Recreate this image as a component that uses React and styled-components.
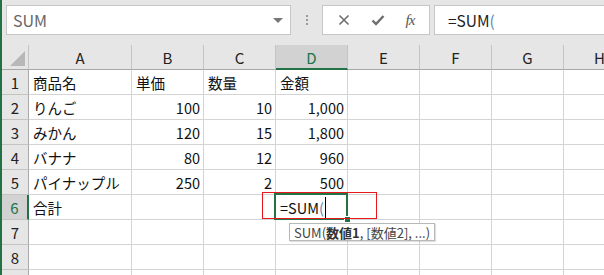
import React from "react"
import styled, { createGlobalStyle } from "styled-components"

const GlobalStyle = createGlobalStyle`
  html, body {
    margin: 0;
    padding: 0;
    background: #e6e6e6;
    overflow: hidden;
  }
  body {
    font-family: "Noto Sans CJK JP", "Noto Sans", sans-serif;
  }
`

const FONT = `"Noto Sans CJK JP", "Noto Sans", sans-serif`

const Window = styled.div`
  width: 604px;
  height: 275px;
  box-sizing: border-box;
  border-left: 2px solid #217346;
  background: #e6e6e6;
  display: flex;
  flex-direction: column;
  overflow: hidden;
`

const Toolbar = styled.div`
  display: flex;
  align-items: center;
  height: 30px;
  padding: 5px 0 10px 4px;
  flex-shrink: 0;
`

const NameBox = styled.div`
  width: 285px;
  height: 30px;
  box-sizing: border-box;
  background: #fff;
  border: 1px solid #c6c6c6;
  display: flex;
  align-items: center;
  justify-content: space-between;
  padding: 0 7px 0 6px;
  font-family: ${FONT};
  font-size: 16px;
  color: #666;
`

const Arrow = styled.span`
  width: 0;
  height: 0;
  border-left: 5px solid transparent;
  border-right: 5px solid transparent;
  border-top: 5px solid #777;
`

const Grip = styled.div`
  width: 31px;
  display: flex;
  flex-direction: column;
  align-items: center;
  gap: 2px;
  div {
    width: 2px;
    height: 2px;
    background: #9a9a9a;
  }
`

const FxButtons = styled.div`
  width: 108px;
  height: 30px;
  box-sizing: border-box;
  background: #fff;
  border: 1px solid #c6c6c6;
  display: flex;
  align-items: center;
  justify-content: space-around;
  padding: 0 4px;
`

const FxLabel = styled.span`
  font-family: "Liberation Serif", serif;
  font-style: italic;
  font-size: 15px;
  color: #555;
  letter-spacing: -1px;
`

const FormulaInput = styled.div`
  flex: 1;
  margin-left: 4px;
  height: 30px;
  box-sizing: border-box;
  background: #fff;
  border: 1px solid #c6c6c6;
  border-right: none;
  display: flex;
  align-items: center;
  padding-left: 13px;
  font-family: ${FONT};
  font-size: 15.5px;
  color: #222;
`

const Paren = styled.span`
  color: #5a86b0;
`

const Sheet = styled.div`
  position: relative;
  display: grid;
  grid-template-columns: 27px 103px repeat(7, 72px);
  grid-template-rows: 25px repeat(9, 25px);
  font-family: ${FONT};
  font-size: 14.5px;
  color: #111;
`

const Corner = styled.div`
  position: relative;
  background: #e6e6e6;
  border-right: 1px solid #c4c4c4;
  border-bottom: 1px solid #a8a8a8;
  &::after {
    content: "";
    position: absolute;
    right: 3px;
    bottom: 3px;
    width: 0;
    height: 0;
    border-left: 15px solid transparent;
    border-bottom: 15px solid #b8b8b8;
  }
`

const ColHead = styled.div`
  background: ${({ $active }) => ($active ? "#d2d2d2" : "#e6e6e6")};
  color: ${({ $active }) => ($active ? "#217346" : "#222")};
  border-right: 1px solid #c4c4c4;
  border-bottom: ${({ $active }) => ($active ? "2px solid #217346" : "1px solid #a8a8a8")};
  display: flex;
  align-items: center;
  justify-content: center;
  font-size: 15px;
  box-sizing: border-box;
  padding-top: ${({ $active }) => ($active ? "1px" : "0")};
`

const RowHead = styled.div`
  background: ${({ $active }) => ($active ? "#d2d2d2" : "#e6e6e6")};
  color: ${({ $active }) => ($active ? "#217346" : "#222")};
  border-right: ${({ $active }) => ($active ? "2px solid #217346" : "1px solid #a8a8a8")};
  border-bottom: 1px solid #c4c4c4;
  display: flex;
  align-items: center;
  justify-content: center;
  font-size: 15px;
  box-sizing: border-box;
`

const Cell = styled.div`
  position: relative;
  background: #fff;
  border-right: 1px solid #d4d4d4;
  border-bottom: 1px solid #d4d4d4;
  box-sizing: border-box;
  display: flex;
  align-items: center;
  justify-content: ${({ $num }) => ($num ? "flex-end" : "flex-start")};
  padding: 0 3px 0 4px;
  white-space: nowrap;
`

const ActiveFrame = styled.div`
  position: absolute;
  left: -2px;
  top: -2px;
  right: -1px;
  bottom: -1px;
  border: 2px solid #217346;
  z-index: 2;
  &::after {
    content: "";
    position: absolute;
    right: -5px;
    bottom: -5px;
    width: 5px;
    height: 5px;
    background: #217346;
    border: 1px solid #fff;
  }
`

const Caret = styled.span`
  display: inline-block;
  width: 1px;
  height: 21px;
  background: #000;
  margin-left: 1px;
`

const Highlight = styled.div`
  position: absolute;
  left: 260px;
  top: 147px;
  width: 115px;
  height: 27px;
  box-sizing: border-box;
  border: 1.5px solid #e8191c;
  z-index: 3;
  pointer-events: none;
`

const Tip = styled.div`
  position: absolute;
  left: 287px;
  top: 178px;
  height: 18px;
  box-sizing: border-box;
  padding: 0 4px;
  background: #fff;
  border: 1px solid #b8b8b8;
  box-shadow: 1px 1px 1px rgba(0, 0, 0, 0.12);
  display: flex;
  align-items: center;
  font-size: 13px;
  color: #444;
  white-space: nowrap;
  z-index: 3;
  b {
    font-weight: 700;
    color: #333;
  }
`

const cols = ["A", "B", "C", "D", "E", "F", "G", "H"]

const rows = [
  ["商品名", "単価", "数量", "金額"],
  ["りんご", 100, 10, "1,000"],
  ["みかん", 120, 15, "1,800"],
  ["バナナ", 80, 12, "960"],
  ["パイナップル", 250, 2, "500"],
  ["合計", "", "", "formula"],
  [],
  [],
  [],
]

const CrossIcon = () => (
  <svg width="12" height="12" viewBox="0 0 12 12">
    <path d="M1.5 1.5 L10.5 10.5 M10.5 1.5 L1.5 10.5" stroke="#6e6e6e" strokeWidth="1.6" />
  </svg>
)

const CheckIcon = () => (
  <svg width="14" height="12" viewBox="0 0 14 12">
    <path d="M1.5 6.5 L5 10 L12.5 2" stroke="#6e6e6e" strokeWidth="2.4" fill="none" />
  </svg>
)

const App = () => {
  return (
    <>
      <GlobalStyle />
      <Window>
        <Toolbar>
          <NameBox>
            SUM
            <Arrow />
          </NameBox>
          <Grip>
            <div />
            <div />
            <div />
          </Grip>
          <FxButtons>
            <CrossIcon />
            <CheckIcon />
            <FxLabel>fx</FxLabel>
          </FxButtons>
          <FormulaInput>
            =SUM<Paren>(</Paren>
          </FormulaInput>
        </Toolbar>
        <Sheet>
          <Corner />
          {cols.map((c) => (
            <ColHead key={c} $active={c === "D"}>
              {c}
            </ColHead>
          ))}
          {rows.map((r, i) => (
            <React.Fragment key={i}>
              <RowHead $active={i === 5}>{i + 1}</RowHead>
              {cols.map((c, j) => {
                const v = r[j]
                if (v === "formula") {
                  return (
                    <Cell key={c}>
                      <ActiveFrame />
                      =SUM<Paren>(</Paren>
                      <Caret />
                    </Cell>
                  )
                }
                const num = i > 0 && j > 0 && j < 4
                return (
                  <Cell key={c} $num={num}>
                    {v}
                  </Cell>
                )
              })}
            </React.Fragment>
          ))}
          <Highlight />
          <Tip>
            SUM(<b>数値1</b>, [数値2], ...)
          </Tip>
        </Sheet>
      </Window>
    </>
  )
}

export default App
